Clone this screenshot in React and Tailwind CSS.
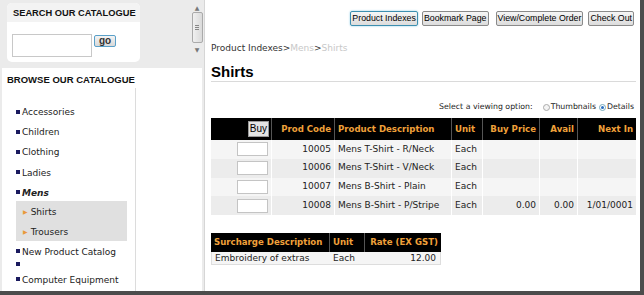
const verd = { fontFamily: '"DejaVu Sans", Verdana, sans-serif' };
const arial = { fontFamily: '"Liberation Sans", Arial, sans-serif' };

const cats = [
  { n: 'Accessories' },
  { n: 'Children' },
  { n: 'Clothing' },
  { n: 'Ladies' },
  { n: 'Mens', b: true },
];

const rows = [
  { c: '10005', d: 'Mens T-Shirt - R/Neck' },
  { c: '10006', d: 'Mens T-Shirt - V/Neck' },
  { c: '10007', d: 'Mens B-Shirt - Plain' },
  { c: '10008', d: 'Mens B-Shirt - P/Stripe', p: '0.00', a: '0.00', n: '1/01/0001' },
];

function Bullet() {
  return <span className="inline-block w-[4px] h-[4px] bg-[#1a1a5e] mr-[2px] align-middle mb-[2px]" />;
}

function Btn({ children, hi }) {
  return (
    <button className={`h-[15px] px-[1px] text-[8.8px] leading-[13px] rounded-[2px] whitespace-nowrap bg-gradient-to-b from-[#f6f6f6] to-[#dcdcdc] text-black ${hi ? 'border border-[#3d8fb0] shadow-[0_0_2px_#7fc4e0]' : 'border border-[#8a8a8a]'}`}
      style={arial}>
      {children}
    </button>
  );
}

export default function App() {
  return (
    <div className="w-[644px] h-[295px] flex bg-[#ebebeb] border-r-4 border-b-4 border-[#4c4c4c] overflow-hidden text-[9px] text-[#222]" style={verd}>
      {/* left frame */}
      <div className="w-[204px] flex flex-col shrink-0">
        <div className="h-[65px] flex pt-[3px]">
          <div className="ml-[7px] w-[133px] h-[59px] bg-white rounded-[5px] flex flex-col overflow-hidden">
            <div className="h-[19px] bg-[#f3f3f3] px-[6px] pt-[5px] text-[9.3px] font-bold text-[#111] leading-[11px] whitespace-nowrap" style={arial}>SEARCH OUR CATALOGUE</div>
            <div className="flex items-start pl-[5px] pt-[12px] gap-[2px]">
              <div className="w-[80px] h-[23px] border border-[#c8c8c8] bg-white" />
              <button className="w-[22px] h-[12px] mt-[1px] text-[10px] leading-[10px] font-bold text-[#333] border border-[#5aa0c8] rounded-[2px] bg-gradient-to-b from-[#f4f4f4] to-[#d8d8d8]" style={arial}>go</button>
            </div>
          </div>
          <div className="flex-1" />
          <div className="w-[12px] mr-[1px] flex flex-col items-center text-[#777]">
            <div className="h-[9px] text-[6px] leading-[9px]">▲</div>
            <div className="w-[11px] h-[31px] rounded-[2px] border border-[#aaa] bg-gradient-to-r from-[#f0f0f0] to-[#dadada] flex items-center justify-center">
              <div className="flex flex-col gap-[1px]">
                <div className="w-[4px] h-px bg-[#888]" />
                <div className="w-[4px] h-px bg-[#888]" />
                <div className="w-[4px] h-px bg-[#888]" />
              </div>
            </div>
            <div className="h-[13px] text-[6px] leading-[13px]">▼</div>
          </div>
        </div>
        <div className="mx-[2px] mt-[3px] flex-1 bg-white flex flex-col">
          <div className="h-[20px] px-[5px] pt-[6px] text-[9.5px] font-bold text-[#111] leading-[11px] whitespace-nowrap" style={arial}>BROWSE OUR CATALOGUE</div>
          <div className="w-[134px] flex-1 border-r border-[#dcdcdc] pl-[14px] pt-[18px] text-[9px]">
            {cats.map(c => (
              <div key={c.n} className={`h-[20.2px] leading-[12px] ${c.b ? 'font-bold italic' : ''}`}><Bullet />{c.n}</div>
            ))}
            <div className="w-[111px] h-[40px] bg-[#e0e0e0] pl-[7px] pt-[5px] -mt-[6px]">
              <div className="h-[20px] leading-[12px]"><span className="text-[#e89a3c] text-[6px] mr-[3px] align-middle">▶</span>Shirts</div>
              <div className="h-[20px] leading-[12px]"><span className="text-[#e89a3c] text-[6px] mr-[3px] align-middle">▶</span>Trousers</div>
            </div>
            <div className="h-[13px] leading-[12px] pt-[5px] box-content"><Bullet />New Product Catalog</div>
            <div className="h-[12px] leading-[12px]"><Bullet /></div>
            <div className="h-[14px] leading-[12px] pt-[3px]"><Bullet />Computer Equipment</div>
          </div>
        </div>
      </div>

      {/* main frame */}
      <div className="flex-1 bg-white border-l border-[#d6d6d6] pl-[6px] pr-[4px] flex flex-col">
        <div className="flex justify-end pt-[11px] pr-[2px]">
          <Btn hi>Product Indexes</Btn>
          <span className="w-[4px]" />
          <Btn>Bookmark Page</Btn>
          <span className="w-[7px]" />
          <Btn>View/Complete Order</Btn>
          <span className="w-[5px]" />
          <Btn>Check Out</Btn>
        </div>
        <div className="mt-[16px] text-[9px] leading-[12px] text-[#333]">
          Product Indexes&gt;<span className="text-[#c8c8c8]">Mens</span>&gt;<span className="text-[#c8c8c8]">Shirts</span>
        </div>
        <div className="mt-[9px] pb-[1px] border-b border-[#dadada] text-[15px] font-bold leading-[17px] text-black" style={arial}>Shirts</div>
        <div className="mt-[20px] flex justify-end items-center text-[7.8px] leading-[10px] pr-[2px]">
          <span className="mr-[10px]">Select a viewing option:</span>
          <span className="w-[7px] h-[7px] rounded-full border border-[#aaa] bg-[#f4f4f4] mr-[1px]" />
          <span className="mr-[3px]">Thumbnails</span>
          <span className="w-[7px] h-[7px] rounded-full border border-[#7ab] bg-white mr-[1px] flex items-center justify-center"><span className="w-[3px] h-[3px] rounded-full bg-[#2a6ec0]" /></span>
          <span>Details</span>
        </div>
        <table className="mt-[6px] w-full table-fixed border-separate border-spacing-0 text-[8.6px]">
          <colgroup>
            <col className="w-[61px]" />
            <col className="w-[63px]" />
            <col className="w-[117px]" />
            <col className="w-[31px]" />
            <col className="w-[57px]" />
            <col className="w-[38px]" />
            <col />
          </colgroup>
          <thead>
            <tr className="bg-black text-[#f0a13a] font-bold h-[22px] whitespace-nowrap">
              <th className="text-right pr-[2px] border-r border-[#555]">
                <span className="inline-block bg-[#e4e4e4] text-black font-normal px-[1px] text-[10px] leading-[14px] border border-[#999]" style={arial}>Buy</span>
              </th>
              <th className="text-right pr-[3px] border-r border-[#555]">Prod Code</th>
              <th className="text-left pl-[3px] border-r border-[#555]">Product Description</th>
              <th className="text-left pl-[3px] border-r border-[#555]">Unit</th>
              <th className="text-right pr-[3px] border-r border-[#555]">Buy Price</th>
              <th className="text-right pr-[3px] border-r border-[#555]">Avail</th>
              <th className="text-right pr-[3px]">Next In</th>
            </tr>
          </thead>
          <tbody className="text-[9px]">
            {rows.map((r, i) => (
              <tr key={r.c} className={`h-[18.75px] ${i % 2 ? 'bg-[#ececec]' : 'bg-[#f5f5f5]'}`}>
                <td className="text-right pr-[3px] border-r border-white leading-[10px]">
                  <span className="inline-block align-middle w-[31px] h-[14px] bg-white border border-[#c4c4c4]" />
                </td>
                <td className="text-right pr-[3px] border-r border-white">{r.c}</td>
                <td className="pl-[3px] border-r border-white whitespace-nowrap">{r.d}</td>
                <td className="pl-[3px] border-r border-white">Each</td>
                <td className="text-right pr-[3px] border-r border-white">{r.p}</td>
                <td className="text-right pr-[3px] border-r border-white">{r.a}</td>
                <td className="text-right pr-[3px]">{r.n}</td>
              </tr>
            ))}
          </tbody>
        </table>
        <table className="mt-[18px] w-[230px] table-fixed border-separate border-spacing-0 text-[8.6px]">
          <colgroup>
            <col className="w-[119px]" />
            <col className="w-[35px]" />
            <col />
          </colgroup>
          <thead>
            <tr className="bg-black text-[#f0a13a] font-bold h-[19px] whitespace-nowrap">
              <th className="text-left pl-[3px] border-r border-[#555]">Surcharge Description</th>
              <th className="text-left pl-[3px] border-r border-[#555]">Unit</th>
              <th className="text-right pr-[3px]">Rate (EX GST)</th>
            </tr>
          </thead>
          <tbody className="text-[9px]">
            <tr className="h-[13px] bg-[#f5f5f5] leading-[11px]">
              <td className="pl-[3px] border-l border-b border-[#ddd] whitespace-nowrap">Embroidery of extras</td>
              <td className="pl-[3px] border-b border-[#ddd]">Each</td>
              <td className="text-right pr-[4px] border-b border-r border-[#ddd]">12.00</td>
            </tr>
          </tbody>
        </table>
      </div>
    </div>
  );
}
